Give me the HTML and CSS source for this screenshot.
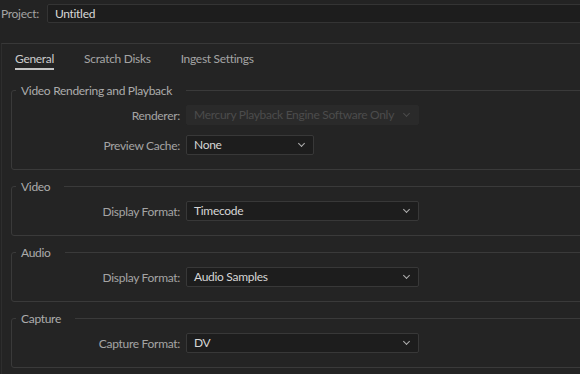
FILE: index.html
```html
<!DOCTYPE html>
<html lang="en">
<head>
    <meta charset="UTF-8">
    <title>Project Settings</title>
    <link rel="stylesheet" href="styles.css">
</head>
<body>
    <div class="project-row">
        <span class="project-label">Project:</span>
        <div class="project-name">Untitled</div>
    </div>

    <div class="panel">
        <div class="tabs">
            <span class="tab active">General</span>
            <span class="tab">Scratch Disks</span>
            <span class="tab">Ingest Settings</span>
        </div>

        <fieldset class="group">
            <legend>Video Rendering and Playback</legend>
            <div class="field">
                <label>Renderer:</label>
                <div class="select wide disabled">Mercury Playback Engine Software Only</div>
            </div>
            <div class="field">
                <label>Preview Cache:</label>
                <div class="select short">None</div>
            </div>
        </fieldset>

        <fieldset class="group">
            <legend>Video</legend>
            <div class="field">
                <label>Display Format:</label>
                <div class="select wide">Timecode</div>
            </div>
        </fieldset>

        <fieldset class="group">
            <legend>Audio</legend>
            <div class="field">
                <label>Display Format:</label>
                <div class="select wide">Audio Samples</div>
            </div>
        </fieldset>

        <fieldset class="group">
            <legend>Capture</legend>
            <div class="field">
                <label>Capture Format:</label>
                <div class="select wide">DV</div>
            </div>
        </fieldset>
    </div>
</body>
</html>
```

FILE: styles.css
```css
body {
    margin: 0;
    background-color: #232323;
    color: #a8a8a8;
    font-family: Lato, "Noto Sans", sans-serif;
    font-size: 12px;
    letter-spacing: -0.3px;
    overflow: hidden;
    height: 374px;
}

/* project name row */
.project-row {
    display: flex;
    align-items: center;
    gap: 8px;
    padding: 4px 0 0 1px;
}
.project-label {
    color: #a4a4a4;
}
.project-name {
    flex: 1;
    height: 17px;
    line-height: 17px;
    padding-left: 7px;
    margin-right: -10px;
    background-color: #1d1d1d;
    border: 1px solid #343434;
    border-radius: 2px;
    color: #d8d8d8;
}

/* settings panel */
.panel {
    margin: 20px -10px 0 1px;
    border-top: 1px solid #383838;
    border-left: 1px solid #2e2e2e;
    background-color: #242424;
    padding-bottom: 40px;
}
.tabs {
    display: flex;
    gap: 30px;
    padding: 7px 0 0 13px;
}
.tab {
    padding-bottom: 2px;
    border-bottom: 2px solid transparent;
    color: #a4a4a4;
}
.tab.active {
    color: #cccccc;
    border-bottom-color: #c4c4c4;
}

/* groups */
.group {
    margin: 13px 0 0 9px;
    padding: 7px 0 14px 0;
    border: 1px solid #3a3a3a;
    border-radius: 3px;
}
.group + .group {
    margin-top: 9px;
}
.group legend {
    margin-left: 4px;
    padding: 0 14px 0 5px;
    color: #acacac;
}
.field {
    display: flex;
    align-items: center;
    gap: 6px;
}
.field + .field {
    margin-top: 10px;
}
.field label {
    width: 168px;
    text-align: right;
    color: #a4a4a4;
}

/* dropdowns */
.select {
    position: relative;
    height: 18px;
    line-height: 18px;
    padding-left: 7px;
    background-color: #1d1d1d;
    border: 1px solid #383838;
    border-radius: 2px;
    color: #d6d6d6;
}
.select::after {
    content: "";
    position: absolute;
    right: 9px;
    top: 5px;
    width: 4px;
    height: 4px;
    border-right: 1px solid #b0b0b0;
    border-bottom: 1px solid #b0b0b0;
    transform: rotate(45deg);
}
.select.wide {
    width: 224px;
}
.select.short {
    width: 119px;
}
.select.disabled {
    background-color: #2a2a2a;
    border-color: #2a2a2a;
    color: #4c4c4c;
}
.select.disabled::after {
    border-color: #4a4a4a;
}
```
